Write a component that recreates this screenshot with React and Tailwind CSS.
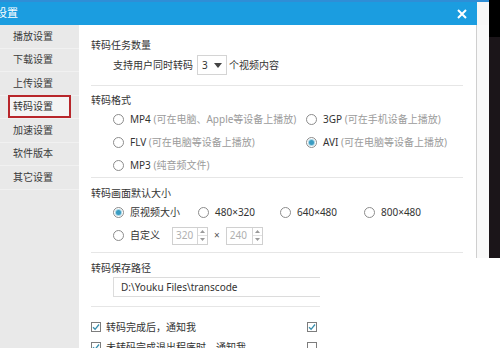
import React from 'react';

const font = { fontFamily: '"Noto Sans", "Noto Sans CJK SC", sans-serif' };

const menu = ['播放设置', '下载设置', '上传设置', '转码设置', '加速设置', '软件版本', '其它设置'];

const Radio = ({ checked }) => (
  <span className="w-[11px] h-[11px] rounded-full border border-[#8c8c8c] bg-white flex items-center justify-center shrink-0">
    {checked && <span className="w-[5px] h-[5px] rounded-full bg-[#3a9cc2] ring-1 ring-[#a9d6e6]" />}
  </span>
);

const Check = ({ checked }) => (
  <span className="w-[10px] h-[10px] border border-[#7d7d7d] bg-white flex items-center justify-center shrink-0">
    {checked && (
      <svg width="8" height="8" viewBox="0 0 8 8">
        <path d="M1 4.2 L3.1 6.3 L7 1.5" fill="none" stroke="#3a8fae" strokeWidth="1.3" />
      </svg>
    )}
  </span>
);

const Spin = () => (
  <div className="w-[10px] h-full border-l border-[#d6d6d6] flex flex-col">
    <div className="flex-1 flex items-center justify-center border-b border-[#e2e2e2]">
      <svg width="5" height="3" viewBox="0 0 5 3"><path d="M0 3 L2.5 0 L5 3Z" fill="#9a9a9a" /></svg>
    </div>
    <div className="flex-1 flex items-center justify-center">
      <svg width="5" height="3" viewBox="0 0 5 3"><path d="M0 0 L2.5 3 L5 0Z" fill="#9a9a9a" /></svg>
    </div>
  </div>
);

const NumBox = ({ value, w }) => (
  <div className={`${w} h-[18px] border border-[#d0d0d0] flex items-center`}>
    <span className="flex-1 pl-[3px] text-[#b0b0b0]">{value}</span>
    <Spin />
  </div>
);

const Line = ({ w = 'w-full' }) => <div className={`${w} h-px bg-[#e6e6e6]`} />;

export default function App() {
  return (
    <div className="w-[500px] h-[348px] overflow-hidden bg-white flex text-[10px] text-[#333]" style={font}>
      {/* settings window */}
      <div className="w-[489px] h-[348px] flex flex-col">
        <div className="h-[2px] shrink-0 bg-[#2f8ed6]" />
        <div className="h-[23px] shrink-0 flex">
          <div className="w-[477px] bg-[#1b9de0] flex items-center justify-between">
            <span className="-ml-[4px] text-[11px] text-white">设置</span>
            <svg className="mr-[10px]" width="10" height="10" viewBox="0 0 10 10">
              <path d="M1 1 L9 9 M9 1 L1 9" stroke="#fff" strokeWidth="2" />
            </svg>
          </div>
          <div className="flex-1 bg-[#f7f7f7]" />
        </div>

        <div className="flex-1 min-h-0 overflow-hidden flex">
          {/* sidebar */}
          <div className="w-[79px] shrink-0 bg-[#e9e9e9] flex flex-col">
            {menu.map((m, i) => (
              <div key={m} className="h-[23.5px] shrink-0 flex items-center border-b border-[#f1f1f1] px-[8px]">
                {i === 3 ? (
                  <div className="w-[65px] h-[23px] border-2 border-[#b8262b] bg-[#f4f4f4] flex items-center pl-[3px]">{m}</div>
                ) : (
                  <span className="pl-[5px] text-[#3a3a3a]">{m}</span>
                )}
              </div>
            ))}
          </div>

          <div className="flex-1 flex flex-col">
            {/* upper part of the window */}
            <div className="h-[233px] shrink-0 flex">
              <div className="w-[398px] border-r border-[#cfcfcf] pl-[12px] pr-[13px] flex flex-col">
                <div className="h-[20px] mt-[10px] flex items-center">转码任务数量</div>
                <div className="h-[20px] flex items-center pl-[22px]">
                  <span>支持用户同时转码</span>
                  <div className="ml-[4px] w-[30px] h-[20px] border border-[#d4d4d4] flex items-center justify-between px-[4px]">
                    <span>3</span>
                    <svg width="8" height="5" viewBox="0 0 8 5"><path d="M0 0 L8 0 L4 5Z" fill="#444" /></svg>
                  </div>
                  <span className="ml-[2px]">个视频内容</span>
                </div>
                <div className="mt-[10px]"><Line /></div>

                <div className="h-[16px] mt-[6px] flex items-center">转码格式</div>
                <div className="pl-[22px] flex flex-col">
                  <div className="h-[23px] flex items-center">
                    <div className="w-[193px] flex items-center gap-[6px]">
                      <Radio /><span>MP4 <span className="text-[#9b9b9b]">(可在电脑、Apple等设备上播放)</span></span>
                    </div>
                    <div className="flex items-center gap-[6px]">
                      <Radio /><span>3GP <span className="text-[#9b9b9b]">(可在手机设备上播放)</span></span>
                    </div>
                  </div>
                  <div className="h-[23px] flex items-center">
                    <div className="w-[193px] flex items-center gap-[6px]">
                      <Radio /><span>FLV <span className="text-[#9b9b9b]">(可在电脑等设备上播放)</span></span>
                    </div>
                    <div className="flex items-center gap-[6px]">
                      <Radio checked /><span>AVI <span className="text-[#9b9b9b]">(可在电脑等设备上播放)</span></span>
                    </div>
                  </div>
                  <div className="h-[23px] flex items-center gap-[6px]">
                    <Radio /><span>MP3 <span className="text-[#9b9b9b]">(纯音频文件)</span></span>
                  </div>
                </div>
                <Line />

                <div className="h-[16px] mt-[7px] flex items-center">转码画面默认大小</div>
                <div className="pl-[22px] flex flex-col">
                  <div className="h-[23px] flex items-center">
                    <div className="w-[85px] flex items-center gap-[6px]"><Radio checked /><span>原视频大小</span></div>
                    <div className="w-[82px] flex items-center gap-[6px]"><Radio /><span>480×320</span></div>
                    <div className="w-[84px] flex items-center gap-[6px]"><Radio /><span>640×480</span></div>
                    <div className="flex items-center gap-[6px]"><Radio /><span>800×480</span></div>
                  </div>
                  <div className="h-[23px] flex items-center">
                    <Radio />
                    <span className="ml-[6px] w-[42px]">自定义</span>
                    <NumBox value="320" w="w-[36px]" />
                    <span className="mx-[6px] text-[#555]">×</span>
                    <NumBox value="240" w="w-[37px]" />
                  </div>
                </div>
                <div className="mt-[5px]"><Line /></div>
              </div>
              <div className="flex-1 bg-[#f9f9f9]" />
            </div>

            {/* lower part */}
            <div className="flex-1 pl-[12px] flex flex-col">
              <div className="h-[16px] shrink-0 mt-[2px] flex items-center">转码保存路径</div>
              <div className="ml-[22px] shrink-0 mt-[1px] w-[207px] h-[20px] border border-[#dcdcdc] border-r-0 flex items-center pl-[7px]">
                D:\Youku Files\transcode
              </div>
              <div className="mt-[9px] shrink-0"><Line w="w-[229px]" /></div>
              <div className="w-[226px] shrink-0 mt-[10px] flex flex-col">
                <div className="h-[20px] flex items-center">
                  <Check checked /><span className="ml-[5px] flex-1">转码完成后，通知我</span><Check checked />
                </div>
                <div className="h-[20px] flex items-center">
                  <Check checked /><span className="ml-[5px] flex-1">未转码完成退出程序时，通知我</span><Check />
                </div>
              </div>
            </div>
          </div>
        </div>
      </div>

      {/* dark strip at the right */}
      <div className="w-[11px] h-[258px] flex flex-col">
        <div className="h-[37px] bg-black" />
        <div className="flex-1 bg-[#1b1519]" />
      </div>
    </div>
  );
}
